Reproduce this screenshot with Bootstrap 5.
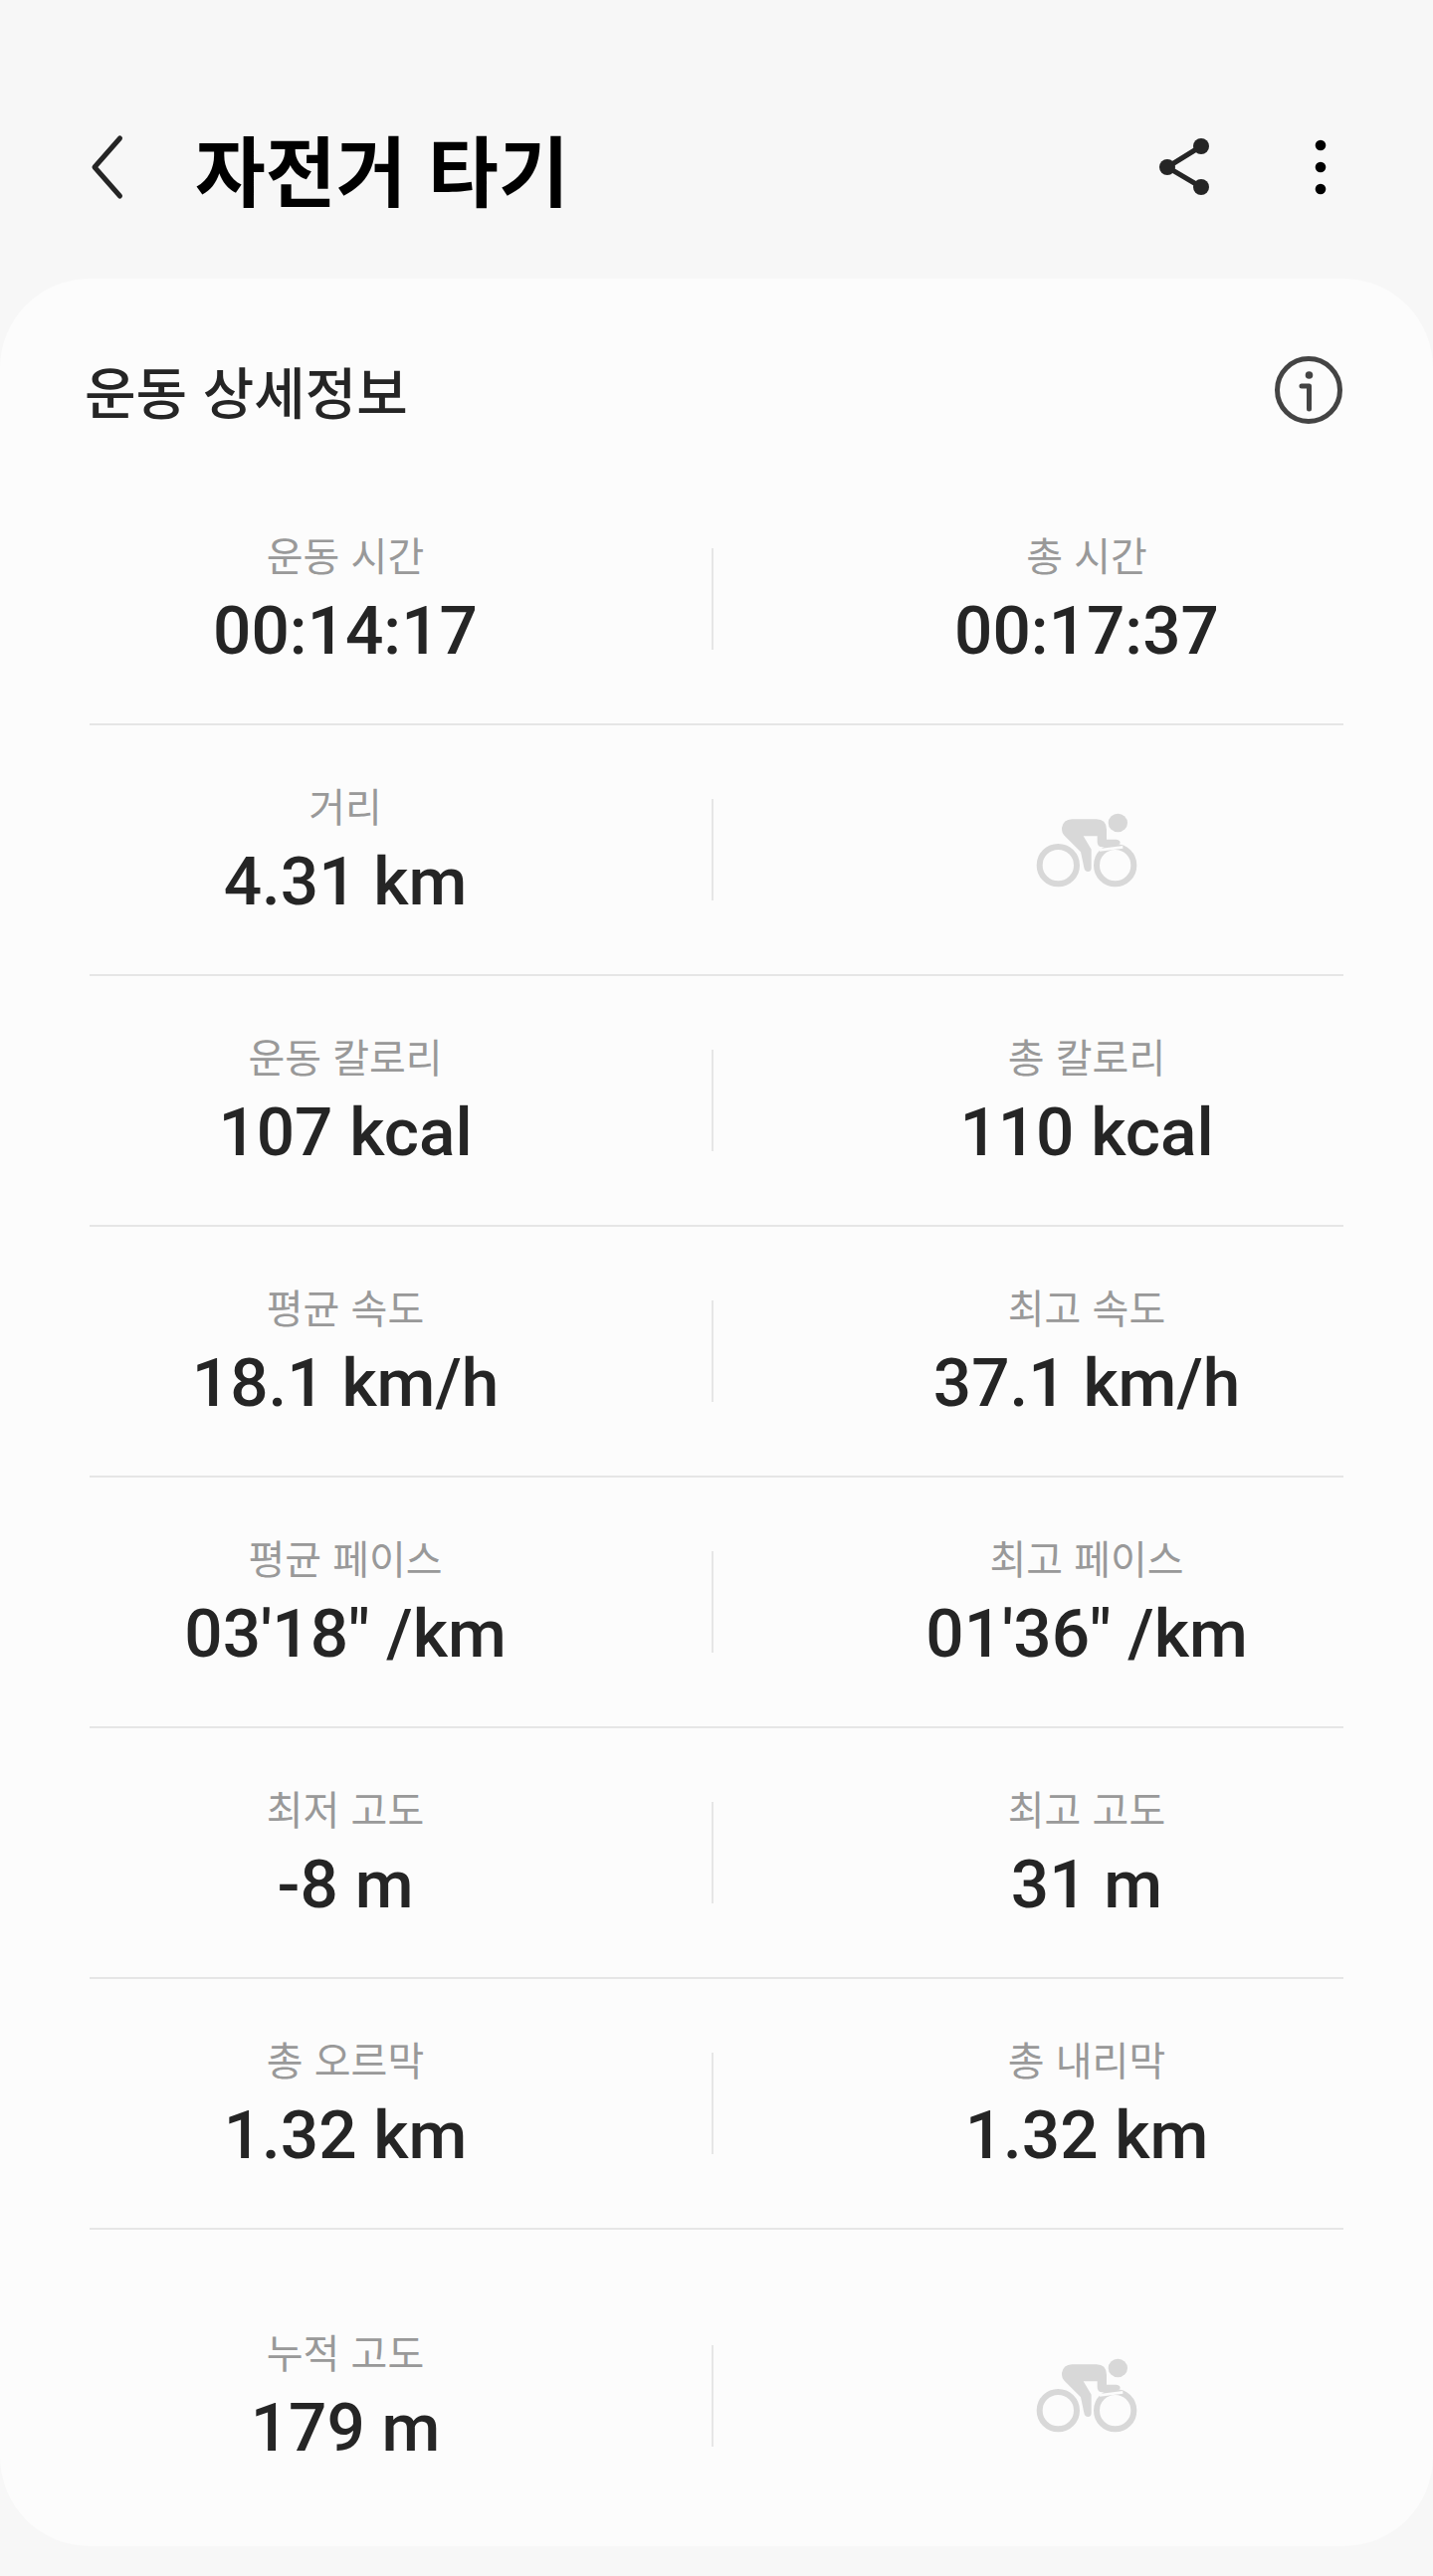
<!DOCTYPE html>
<html lang="ko">
<head>
<meta charset="utf-8">
<title>자전거 타기</title>
<link href="https://cdn.jsdelivr.net/npm/bootstrap@5.3.0/dist/css/bootstrap.min.css" rel="stylesheet">
<style>
html,body{margin:0;background:#f7f7f7}
body{width:1440px;height:2589px;overflow:hidden;font-family:Roboto,"Noto Sans CJK KR",sans-serif}
.top-bar{height:280px;padding:56px 101px 0 89px}
.top-bar svg{display:block;flex:none}
.app-title{font:700 77px/1 "Noto Sans CJK KR",sans-serif;color:#000;white-space:nowrap;margin-left:67px}
.icon-gap{gap:93px}
.sheet{height:2279px;background:#fcfcfc;border-radius:90px;padding:0 90px}
.sheet-head{height:197px;padding-top:27px}
.sheet-title{font:500 56px/1 "Noto Sans CJK KR",sans-serif;color:#252525;white-space:nowrap;margin-left:-5px}
.stat-row{height:252px;border-bottom:2px solid #e6e6e6}
.stat-row.last{height:318px;border-bottom:0;padding-top:41px;padding-bottom:26px}
.stat-cell{width:514px;flex:none;text-align:center;padding-top:2px}
.stat-cell.icon-cell{padding-top:0}
.stat-cell+.vrule+.stat-cell{width:516px}
.vrule{width:2px;height:102px;background:#e6e6e6;margin-left:111px;margin-right:117px;flex:none}
.stat-label{display:block;font:400 40px/48px "Noto Sans CJK KR",sans-serif;color:#999}
.stat-value{display:block;font:500 67.5px/78px Roboto,sans-serif;color:#252525;margin-top:14px}
.sprite{position:absolute;width:0;height:0}
</style>
</head>
<body>
<header class="top-bar d-flex align-items-center">
  <svg width="40" height="70" viewBox="0 0 40 70" aria-hidden="true"><path d="M31.5 6 L6 35 L31.5 64" fill="none" stroke="#252525" stroke-width="5" stroke-linecap="round" stroke-linejoin="round"/></svg>
  <h1 class="app-title mb-0">자전거 타기</h1>
  <div class="ms-auto d-flex align-items-center icon-gap">
    <svg width="60" height="60" viewBox="0 0 60 60" aria-hidden="true"><path d="M45 9 L11 30 L45 50" fill="none" stroke="#252525" stroke-width="5"/><circle cx="45" cy="9" r="8" fill="#252525"/><circle cx="11" cy="30" r="8" fill="#252525"/><circle cx="45" cy="50" r="8" fill="#252525"/></svg>
    <svg width="24" height="60" viewBox="0 0 24 60" aria-hidden="true"><circle cx="12" cy="8" r="5.3"/><circle cx="12" cy="30" r="5.3"/><circle cx="12" cy="52" r="5.3"/></svg>
  </div>
</header>
<main class="sheet">
  <div class="sheet-head d-flex align-items-center justify-content-between">
    <h2 class="sheet-title mb-0">운동 상세정보</h2>
    <svg width="70" height="70" viewBox="0 0 70 70" aria-hidden="true"><circle cx="35" cy="35" r="31.5" fill="none" stroke="#444" stroke-width="5"/><circle cx="35.5" cy="20" r="3.8" fill="#444"/><path d="M28 31 H35.5 V54" fill="none" stroke="#444" stroke-width="5" stroke-linecap="round" stroke-linejoin="round"/></svg>
  </div>

  <section class="stat-row d-flex align-items-center">
    <div class="stat-cell"><span class="stat-label">운동 시간</span><span class="stat-value">00:14:17</span></div><div class="vrule"></div>
    <div class="stat-cell"><span class="stat-label">총 시간</span><span class="stat-value">00:17:37</span></div>
  </section>
  <section class="stat-row d-flex align-items-center">
    <div class="stat-cell"><span class="stat-label">거리</span><span class="stat-value">4.31 km</span></div><div class="vrule"></div>
    <div class="stat-cell icon-cell d-flex justify-content-center">
      <svg width="104" height="75" viewBox="1080 290 312 225" aria-hidden="true"><use href="#bike"/></svg>
    </div>
  </section>
  <section class="stat-row d-flex align-items-center">
    <div class="stat-cell"><span class="stat-label">운동 칼로리</span><span class="stat-value">107 kcal</span></div><div class="vrule"></div>
    <div class="stat-cell"><span class="stat-label">총 칼로리</span><span class="stat-value">110 kcal</span></div>
  </section>
  <section class="stat-row d-flex align-items-center">
    <div class="stat-cell"><span class="stat-label">평균 속도</span><span class="stat-value">18.1 km/h</span></div><div class="vrule"></div>
    <div class="stat-cell"><span class="stat-label">최고 속도</span><span class="stat-value">37.1 km/h</span></div>
  </section>
  <section class="stat-row d-flex align-items-center">
    <div class="stat-cell"><span class="stat-label">평균 페이스</span><span class="stat-value">03'18" /km</span></div><div class="vrule"></div>
    <div class="stat-cell"><span class="stat-label">최고 페이스</span><span class="stat-value">01'36" /km</span></div>
  </section>
  <section class="stat-row d-flex align-items-center">
    <div class="stat-cell"><span class="stat-label">최저 고도</span><span class="stat-value">-8 m</span></div><div class="vrule"></div>
    <div class="stat-cell"><span class="stat-label">최고 고도</span><span class="stat-value">31 m</span></div>
  </section>
  <section class="stat-row d-flex align-items-center">
    <div class="stat-cell"><span class="stat-label">총 오르막</span><span class="stat-value">1.32 km</span></div><div class="vrule"></div>
    <div class="stat-cell"><span class="stat-label">총 내리막</span><span class="stat-value">1.32 km</span></div>
  </section>
  <section class="stat-row last d-flex align-items-center">
    <div class="stat-cell"><span class="stat-label">누적 고도</span><span class="stat-value">179 m</span></div><div class="vrule"></div>
    <div class="stat-cell icon-cell d-flex justify-content-center">
      <svg width="104" height="75" viewBox="1080 290 312 225" aria-hidden="true"><use href="#bike"/></svg>
    </div>
  </section>
</main>
<svg class="sprite" aria-hidden="true"><defs><g id="bike">
  <circle cx="1150" cy="448" r="56" fill="none" stroke="#d8d8d8" stroke-width="18"/>
  <circle cx="1322" cy="448" r="56" fill="none" stroke="#d8d8d8" stroke-width="18"/>
  <path d="M1275 402 L1345 393" stroke="#fcfcfc" stroke-width="8" fill="none"/>
  <path d="M1192 309 H1265 Q1295 309 1296 340 V370 H1325 Q1338 372 1337 381 Q1335 387 1325 388 L1285 393 Q1268 394 1268 378 V360 H1226 L1250 400 V455 Q1250 467 1240 467 Q1230 467 1228 455 L1218 408 L1170 360 Q1160 350 1161 335 Q1165 310 1192 309Z" fill="#d8d8d8"/>
  <ellipse cx="1330" cy="320" rx="29" ry="28" fill="#d8d8d8"/>
</g></defs></svg>
<script src="https://cdn.jsdelivr.net/npm/bootstrap@5.3.0/dist/js/bootstrap.bundle.min.js"></script>
</body>
</html>
